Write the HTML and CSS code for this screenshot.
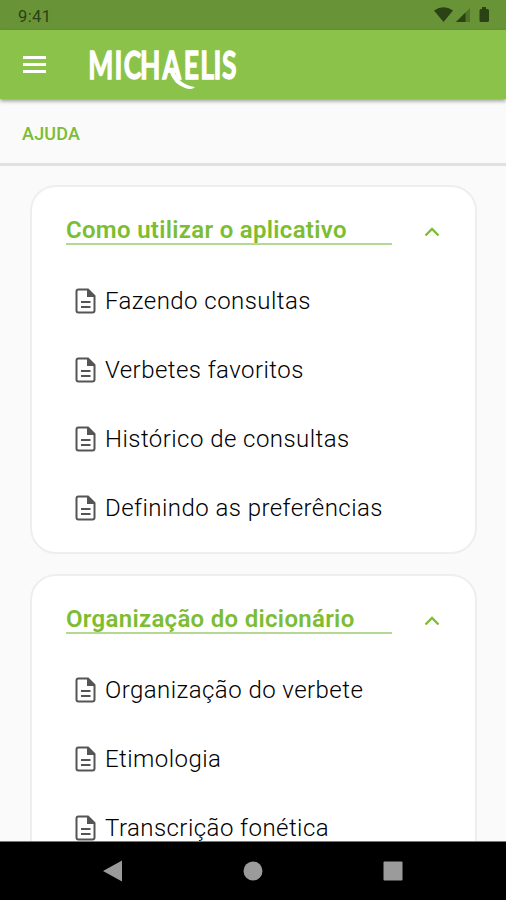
FILE: index.html
```html
<!DOCTYPE html>
<html lang="pt-BR">
<head>
  <meta charset="UTF-8" />
  <meta name="viewport" content="width=device-width, initial-scale=1.0"/>
  <title>Michaelis - Ajuda</title>
  <link rel="stylesheet" href="styles.css">
</head>
<body>

  <!-- Shared icons -->
  <svg class="sprite" width="0" height="0">
    <symbol id="icon-doc" viewBox="0 0 22 26">
      <path d="M3.5 1.5H13L19.5 8V22.5Q19.5 24.5 17.5 24.5H3.5Q1.5 24.5 1.5 22.5V3.5Q1.5 1.5 3.5 1.5Z" fill="none" stroke="#555" stroke-width="2"/>
      <path d="M12 1L20 9H12Z" fill="#555"/>
      <path d="M6 14H15.500M6 19H15.500" stroke="#555" stroke-width="2"/>
    </symbol>
    <symbol id="icon-up" viewBox="0 0 16 10">
      <path d="M1.500 8.500L8 2L14.500 8.500" fill="none" stroke="#7cbd31" stroke-width="2.300"/>
    </symbol>
  </svg>

  <div class="status-bar">
    <span class="time">9:41</span>
    <svg class="status-icons" width="58" height="18" viewBox="0 0 58 18">
      <path d="M-1 4.500Q8.500 -2 18 4.500L8.500 16Z"/>
      <path d="M35 2V16H21Z" opacity=".4"/>
      <path d="M30.500 6.500V16H21Z"/>
      <path d="M47 1H51V3H52.500Q54 3 54 4.500V14.500Q54 16 52.500 16H46Q44.500 16 44.500 14.500V4.500Q44.500 3 46 3H47Z"/>
    </svg>
  </div>

  <header class="app-bar">
    <button class="menu-btn" aria-label="Menu"><span></span><span></span><span></span></button>
    <svg class="logo" width="160" height="60" viewBox="0 0 160 60">
      <text class="logo-text" transform="scale(.68 1)" x="-1 37.500 51 75 108 139.500 163.500 183 195.500" y="44.500">MICHAELIS</text>
      <path d="M84 33Q89 50 106 52Q103 55.500 96 53Q84 49 80 35Z" fill="#fff"/>
    </svg>
  </header>

  <div class="section-bar">AJUDA</div>

  <main class="content">
    <section class="card">
      <div class="card-header">
        <h2>Como utilizar o aplicativo</h2>
        <svg class="chevron"><use href="#icon-up"/></svg>
      </div>
      <ul>
        <li><svg class="doc"><use href="#icon-doc"/></svg><span>Fazendo consultas</span></li>
        <li><svg class="doc"><use href="#icon-doc"/></svg><span>Verbetes favoritos</span></li>
        <li><svg class="doc"><use href="#icon-doc"/></svg><span>Histórico de consultas</span></li>
        <li><svg class="doc"><use href="#icon-doc"/></svg><span>Definindo as preferências</span></li>
      </ul>
    </section>

    <section class="card">
      <div class="card-header">
        <h2>Organização do dicionário</h2>
        <svg class="chevron"><use href="#icon-up"/></svg>
      </div>
      <ul>
        <li><svg class="doc"><use href="#icon-doc"/></svg><span>Organização do verbete</span></li>
        <li><svg class="doc"><use href="#icon-doc"/></svg><span>Etimologia</span></li>
        <li><svg class="doc"><use href="#icon-doc"/></svg><span>Transcrição fonética</span></li>
      </ul>
    </section>
  </main>

  <nav class="nav-bar">
    <svg width="20" height="22" viewBox="0 0 20 22"><path d="M0 11L19 .5V21.500Z"/></svg>
    <svg width="20" height="20" viewBox="0 0 20 20"><circle cx="10" cy="10" r="9.500"/></svg>
    <svg width="20" height="20" viewBox="0 0 20 20"><rect x=".5" y=".5" width="19" height="19" rx="1"/></svg>
  </nav>

</body>
</html>
```

FILE: styles.css
```css
* {
  box-sizing: border-box;
  margin: 0;
  padding: 0;
}

body {
  display: flex;
  flex-direction: column;
  height: 900px;
  overflow: hidden;
  font-family: Roboto, sans-serif;
  background-color: #fafafa;
  color: #000;
}

.sprite {
  position: absolute;
}

.status-bar {
  display: flex;
  flex: none;
  justify-content: space-between;
  align-items: center;
  height: 30px;
  padding: 0 13px 0 18px;
  background-color: #689437;
}

.time {
  font-size: 16.5px;
  font-weight: 400;
  letter-spacing: 0.4px;
  color: #2a4214;
  padding-top: 2px;
}

.status-icons {
  overflow: visible;
  fill: #2a4214;
}

.app-bar {
  display: flex;
  flex: none;
  align-items: center;
  height: 69px;
  padding-left: 23px;
  background-color: #8bc34a;
  box-shadow: 0 2px 4px rgba(0, 0, 0, 0.4);
  z-index: 1;
}

.menu-btn {
  display: flex;
  flex-direction: column;
  gap: 4px;
  width: 23px;
  border: none;
  background: none;
}

.menu-btn span {
  height: 3px;
  background-color: #fff;
}

.logo {
  margin-left: 43px;
}

.logo-text {
  font-family: Lato, sans-serif;
  font-size: 39px;
  font-weight: 700;
  fill: #fff;
  stroke: #fff;
  stroke-width: 1.3px;
}

.section-bar {
  flex: none;
  height: 67px;
  padding-left: 22px;
  border-bottom: 3px solid #e0e0e0;
  font-size: 18px;
  font-weight: 500;
  letter-spacing: 0.2px;
  line-height: 69px;
  color: #7cbd31;
}

.content {
  display: flex;
  flex: 1;
  flex-direction: column;
  gap: 20px;
  min-height: 0;
  padding: 19px 29px 0 30px;
  overflow: hidden;
}

.card {
  flex: none;
  height: 369px;
  padding: 28px 35px 0 34px;
  border: 2px solid #eee;
  border-radius: 26px;
  background-color: #fff;
}

.card-header {
  display: flex;
  align-items: center;
  height: 30px;
}

h2 {
  width: 326px;
  height: 29px;
  border-bottom: 2px solid #b4d992;
  font-size: 24px;
  font-weight: 600;
  letter-spacing: 0.3px;
  line-height: 29px;
  white-space: nowrap;
  color: #7cbd31;
}

.chevron {
  width: 16px;
  height: 10px;
  margin-left: 32px;
  margin-top: 3px;
}

ul {
  padding: 21px 0 0 9px;
  list-style: none;
}

li {
  display: flex;
  align-items: center;
  gap: 8px;
  height: 69px;
  font-size: 24px;
  font-weight: 350;
  letter-spacing: 0.45px;
  white-space: nowrap;
}

.doc {
  flex: none;
  width: 22px;
  height: 26px;
}

.nav-bar {
  display: flex;
  flex: none;
  justify-content: space-between;
  align-items: center;
  height: 59px;
  padding: 0 103px;
  border-top: 1px solid #777;
  background-color: #000;
  fill: #9b9b9b;
}
```
